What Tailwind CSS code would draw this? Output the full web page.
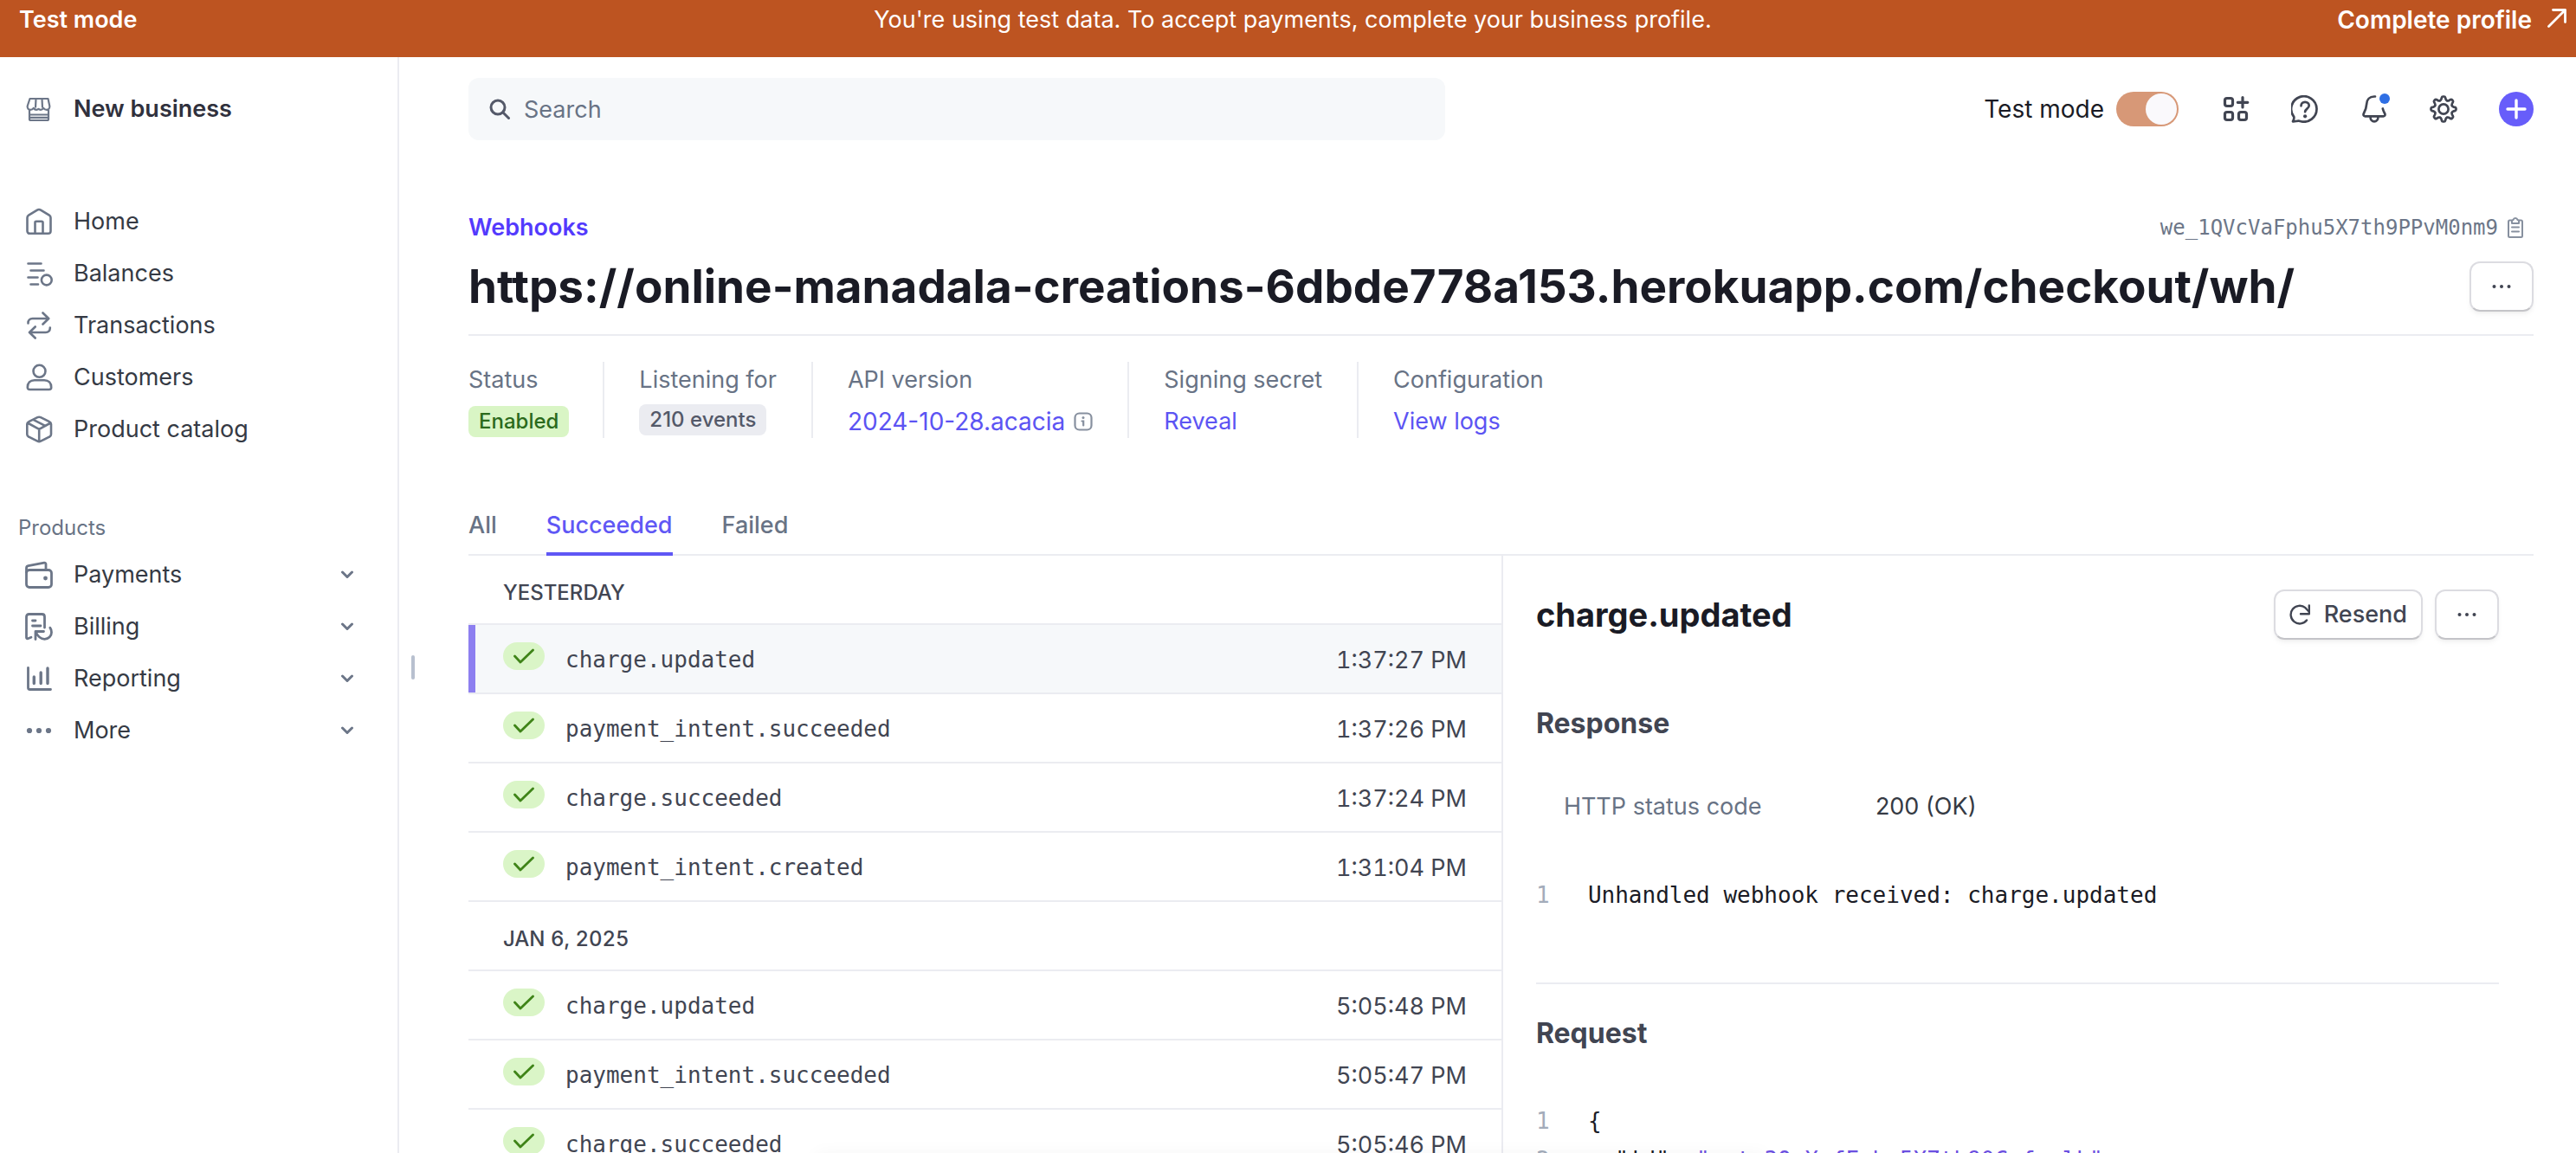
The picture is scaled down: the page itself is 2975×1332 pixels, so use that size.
<!DOCTYPE html>
<html lang="en">
<head>
<meta charset="utf-8">
<meta name="viewport" content="width=device-width, initial-scale=1">
<title>Webhooks</title>
<script src="https://cdn.jsdelivr.net/npm/@tailwindcss/browser@4"></script>
</head>
<body class="flex h-screen flex-col overflow-hidden bg-white font-['Inter','Liberation_Sans',sans-serif] text-[27px] leading-8 text-[#414552]">

<!-- Test mode banner -->
<div class="grid h-[66px] shrink-0 grid-cols-[1fr_auto_1fr] items-start bg-[#bd5421] pr-[11px] pl-[22px] leading-[46px] text-white">
  <strong class="font-semibold">Test mode</strong>
  <p>You're using test data. To accept payments, complete your business profile.</p>
  <a href="#" class="flex items-start justify-end gap-[18px] text-[28px] font-semibold">Complete profile
    <svg class="mt-[10px] size-[22px]" viewBox="0 0 22 22" fill="none" stroke="currentColor" stroke-width="2.800" stroke-linecap="round" stroke-linejoin="round"><path d="M1.500 20.500 20.500 1.500M6.500 1.500h14v14"/></svg>
  </a>
</div>

<div class="flex min-h-0 flex-1">
  <!-- Sidebar -->
  <nav class="w-[461px] shrink-0 border-r-2 border-[#ebecf1] text-[#353a44]" aria-label="Main">
    <a href="#" class="mt-[30px] flex h-[60px] items-center gap-6 pl-[29px] font-semibold text-[#30313d]">
      <svg class="size-8 text-[#6c7688]" viewBox="0 0 32 32" fill="none" stroke="currentColor" stroke-width="2.200" stroke-linejoin="round"><path d="M5.500 4h21l1.800 8.500c.4 2.500-1.200 4.300-3.300 4.300s-3.300-1.300-3.800-2c-.8 1.200-2 2-3.300 2s-2-.6-2.400-1c-.5.500-1.200 1-2.400 1s-2.600-.9-3.300-2c-.6.900-1.800 2-3.800 2-2.200 0-3.700-1.800-3.300-4.300zM12.500 4 12 14.500M19.500 4l.5 10.500M5 17v10.500c0 .9.700 1.500 1.500 1.500h19c.8 0 1.500-.6 1.500-1.500V17M5 22.500h22M5 25.800h22"/></svg>
      New business</a>

    <ul class="mt-[70px]">
      <li><a href="#" class="flex h-[60px] items-center gap-6 pl-[29px]">
        <svg class="size-8 text-[#6c7688]" viewBox="0 0 32 32" fill="none" stroke="currentColor" stroke-width="2.600" stroke-linejoin="round"><path d="M2.500 11.500c0-1.300.6-2.200 1.600-2.800L14 2.600c1.300-.8 2.700-.8 4 0l9.900 6.100c1 .6 1.600 1.500 1.600 2.800V27c0 1.600-1.200 2.800-2.800 2.800H5.300A2.800 2.800 0 0 1 2.500 27zM11.500 29.500V17c0-.8.6-1.300 1.300-1.300h6.400c.7 0 1.300.5 1.300 1.300v12.500"/></svg>
        Home</a></li>
      <li><a href="#" class="flex h-[60px] items-center gap-6 pl-[29px]">
        <svg class="size-8 text-[#6c7688]" viewBox="0 0 32 32" fill="none" stroke="currentColor" stroke-width="2.600" stroke-linecap="round"><path d="M3.500 4.500h15M6.500 12.500h15M3.500 20.500h11M6.500 28.500h8.500"/><circle cx="24.800" cy="23.500" r="5.900"/></svg>
        Balances</a></li>
      <li><a href="#" class="flex h-[60px] items-center gap-6 pl-[29px]">
        <svg class="size-8 text-[#6c7688]" viewBox="0 0 32 32" fill="none" stroke="currentColor" stroke-width="2.600" stroke-linecap="round" stroke-linejoin="round"><path d="M3.500 13.500V13c0-3 2-5 5-5h18.500M20.500 1.500 27.200 8l-6.700 6.500M28.800 18.500v.5c0 3-2 5-5 5H5.200M11.700 17.500 5 24l6.700 6.500"/></svg>
        Transactions</a></li>
      <li><a href="#" class="flex h-[60px] items-center gap-6 pl-[29px]">
        <svg class="size-8 text-[#6c7688]" viewBox="0 0 32 32" fill="none" stroke="currentColor" stroke-width="2.600" stroke-linejoin="round"><circle cx="16.500" cy="8.800" r="7"/><path d="M2.800 27.500c0-5 3-8.200 8-8.200h11.400c5 0 8 3.200 8 8.200 0 1.500-.9 2.500-2.500 2.500H5.300c-1.600 0-2.500-1-2.500-2.500z"/></svg>
        Customers</a></li>
      <li><a href="#" class="flex h-[60px] items-center gap-6 pl-[29px]">
        <svg class="size-8 text-[#6c7688]" viewBox="0 0 32 32" fill="none" stroke="currentColor" stroke-width="2.600" stroke-linejoin="round"><path d="M14.300 2.200c1.200-.6 2.500-.6 3.700 0l10 4.900c1.300.6 2 1.600 2 3v11.600c0 1.400-.7 2.400-2 3l-10 5c-1.200.6-2.500.6-3.700 0l-10-5c-1.300-.6-2-1.600-2-3V10.100c0-1.400.7-2.400 2-3zM2.800 8.500l13.400 7.300 13.300-7.300M16.200 15.800v14.500M9.500 4.800l13.600 7"/></svg>
        Product catalog</a></li>
    </ul>

    <h2 class="mt-[69px] mb-[9px] pl-[21px] text-2xl leading-[30px] text-[#687385]">Products</h2>
    <ul>
      <li><button type="button" class="flex h-[60px] w-full items-center gap-6 pr-[50px] pl-[29px] text-left">
        <svg class="size-8 text-[#6c7688]" viewBox="0 0 32 32" fill="none" stroke="currentColor" stroke-width="2.800" stroke-linejoin="round"><rect x="1.500" y="10.500" width="29" height="20" rx="3.500"/><path d="M1.500 14V8.200c0-1.500.7-2.300 2.200-2.600L22 2.200c1.300-.2 2 .4 2 1.600v6.500"/><circle cx="23.500" cy="20" r="2.400" fill="currentColor" stroke="none"/></svg>
        <span class="flex-1">Payments</span>
        <svg class="h-[10px] w-4 text-[#6c7688]" viewBox="0 0 16 10" fill="none" stroke="currentColor" stroke-width="3" stroke-linecap="round" stroke-linejoin="round"><path d="m2.500 2 5.500 5.500L13.500 2"/></svg></button></li>
      <li><button type="button" class="flex h-[60px] w-full items-center gap-6 pr-[50px] pl-[29px] text-left">
        <svg class="size-8 text-[#6c7688]" viewBox="0 0 32 32" fill="none" stroke="currentColor" stroke-width="2.800" stroke-linecap="round" stroke-linejoin="round"><path d="M7 28.300l-3.800 1.400c-1 .3-1.700-.2-1.700-1.200V4.500c0-1.800 1.200-3 3-3h15c1.800 0 3 1.200 3 3V17M8.500 9h3.500M8.500 15h9.500M12 30.500v-9h9.500M12.300 22c2 4.500 5.500 8.300 10.200 8.300 4.500 0 8-3.300 8-7.800 0-2-.6-3.800-1.700-5.300"/></svg>
        <span class="flex-1">Billing</span>
        <svg class="h-[10px] w-4 text-[#6c7688]" viewBox="0 0 16 10" fill="none" stroke="currentColor" stroke-width="3" stroke-linecap="round" stroke-linejoin="round"><path d="m2.500 2 5.500 5.500L13.500 2"/></svg></button></li>
      <li><button type="button" class="flex h-[60px] w-full items-center gap-6 pr-[50px] pl-[29px] text-left">
        <svg class="size-8 text-[#6c7688]" viewBox="0 0 32 32" fill="none" stroke="currentColor" stroke-width="2.800" stroke-linecap="round" stroke-linejoin="round"><path d="M3.500 3.500v23c0 1.300.7 2 2 2h24"/><path stroke-width="3.400" d="M10.300 14v7.500M18.200 9v12.500M26 4v17.500"/></svg>
        <span class="flex-1">Reporting</span>
        <svg class="h-[10px] w-4 text-[#6c7688]" viewBox="0 0 16 10" fill="none" stroke="currentColor" stroke-width="3" stroke-linecap="round" stroke-linejoin="round"><path d="m2.500 2 5.500 5.500L13.500 2"/></svg></button></li>
      <li><button type="button" class="flex h-[60px] w-full items-center gap-6 pr-[50px] pl-[29px] text-left">
        <svg class="size-8 text-[#6c7688]" viewBox="0 0 32 32" fill="currentColor"><circle cx="5" cy="16" r="3.100"/><circle cx="16" cy="16" r="3.100"/><circle cx="27" cy="16" r="3.100"/></svg>
        <span class="flex-1">More</span>
        <svg class="h-[10px] w-4 text-[#6c7688]" viewBox="0 0 16 10" fill="none" stroke="currentColor" stroke-width="3" stroke-linecap="round" stroke-linejoin="round"><path d="m2.500 2 5.500 5.500L13.500 2"/></svg></button></li>
    </ul>
  </nav>

  <!-- Sidebar resize handle -->
  <div class="w-20 shrink-0 pt-[691px] pl-[14px]">
    <button type="button" aria-label="Resize sidebar" class="block h-7 w-1 rounded-full bg-[#b8c0cf]"></button>
  </div>

  <div class="flex min-w-0 flex-1 flex-col pt-6 pr-[49px]">
    <!-- Toolbar -->
    <header class="flex h-[72px] shrink-0 items-center justify-between">
      <label class="flex h-full max-w-[1128px] flex-1 items-center gap-4 rounded-xl bg-[#f6f8fa] pl-6">
        <svg class="size-6 text-[#545969]" viewBox="0 0 24 24" fill="none" stroke="currentColor" stroke-width="3" stroke-linecap="round"><circle cx="10" cy="10" r="8"/><path d="m16 16 6.500 6.500"/></svg>
        <span class="sr-only">Search</span>
        <input type="search" placeholder="Search" class="h-full min-w-0 flex-1 bg-transparent outline-none placeholder:text-[#687385]">
      </label>
      <div class="flex items-center gap-12 text-[#414552]">
        <label class="mr-0.5 flex items-center gap-[14px] text-[28px] text-[#1a1b25]">Test mode
          <input type="checkbox" role="switch" checked class="flex h-10 w-[72px] appearance-none items-center justify-end rounded-full bg-[#d79877] pr-[2px] before:block before:size-9 before:rounded-full before:bg-[#faf9fc]">
        </label>
        <button type="button" aria-label="Apps"><svg class="size-8" viewBox="0 0 32 32" fill="none" stroke="currentColor" stroke-width="3.200" stroke-linecap="round"><rect x="3.500" y="3.500" width="9" height="9" rx="2.500"/><rect x="3.500" y="19.500" width="9" height="9" rx="2.500"/><rect x="19.500" y="19.500" width="9" height="9" rx="2.500"/><path d="M24 2.500v11.500M18.300 8.300h11.500"/></svg></button>
        <button type="button" aria-label="Help"><svg class="size-8" viewBox="0 0 32 32" fill="none" stroke="currentColor" stroke-width="2.700" stroke-linecap="round" stroke-linejoin="round"><path d="M2 30.300c1-1.500 1.500-3.300 1.300-5.200A14.700 14.700 0 1 1 10.500 30c-2.500-1-5.500.6-8.500.3zM11.500 12.300c0-2.700 2-4.500 4.600-4.500s4.600 1.800 4.600 4.200c0 3.400-4.600 3.800-4.600 7.200"/><circle cx="16.100" cy="24.300" r="2.100" fill="currentColor" stroke="none"/></svg></button>
        <button type="button" aria-label="Notifications" class="relative"><svg class="size-8" viewBox="0 0 32 32" fill="none" stroke="currentColor" stroke-width="2.700" stroke-linecap="round" stroke-linejoin="round"><path d="M17 1.500h-1c-5.500 0-8.500 3.500-8.800 8.500-.3 4.500-1.300 7.500-3.300 11-.9 1.700-.3 3.300 1.500 3.300h21.200c1.800 0 2.400-1.600 1.500-3.300-1-1.800-1.800-3.500-2.300-5.500M11.500 25c0 3 2 5.300 4.500 5.300s4.500-2.300 4.500-5.300"/></svg><span class="absolute -top-0.5 -right-0.5 size-3 rounded-full bg-[#2f6fe4]"></span></button>
        <button type="button" aria-label="Settings"><svg class="size-8" viewBox="0 0 32 32" fill="none" stroke="currentColor" stroke-width="2.700" stroke-linecap="round" stroke-linejoin="round"><path id="tooth" d="M11.940 6.210Q13.200 5.700 13.600 4.200L13.900 2.900Q14.200 1.500 15.400 1.500H16.600Q17.800 1.500 18.100 2.900L18.400 4.200Q18.800 5.700 20.060 6.210"/><use href="#tooth" transform="rotate(45 16 16)"/><use href="#tooth" transform="rotate(90 16 16)"/><use href="#tooth" transform="rotate(135 16 16)"/><use href="#tooth" transform="rotate(180 16 16)"/><use href="#tooth" transform="rotate(225 16 16)"/><use href="#tooth" transform="rotate(270 16 16)"/><use href="#tooth" transform="rotate(315 16 16)"/><circle cx="16" cy="16" r="5.600"/></svg></button>
        <button type="button" aria-label="Create" class="flex size-10 items-center justify-center rounded-full bg-[#675dfa] text-white"><svg class="size-6" viewBox="0 0 24 24" stroke="currentColor" stroke-width="3.400" stroke-linecap="round"><path d="M12 2v20M2 12h20"/></svg></button>
      </div>
    </header>

    <main class="mt-[84px] flex min-h-0 flex-1 flex-col">
      <div class="flex shrink-0 items-center justify-between leading-[34px]">
        <a href="#" class="font-semibold text-[#533afd]">Webhooks</a>
        <button type="button" class="flex items-center gap-2 pr-[9px] font-['DejaVu_Sans_Mono',monospace] text-2xl leading-[34px] text-[#6c7688]">we_1QVcVaFphu5X7th9PPvM0nm9
          <svg class="size-6 text-[#87909f]" viewBox="0 0 24 24" fill="none" stroke="currentColor" stroke-width="2" stroke-linecap="round" stroke-linejoin="round"><path d="M8 3.500H5.500C4.600 3.500 4 4.100 4 5v16.500c0 .9.600 1.500 1.500 1.500h13c.9 0 1.500-.6 1.500-1.500V5c0-.9-.6-1.500-1.500-1.500H16M8 7V3.500l1.500-.5a2.600 2.600 0 0 1 5 0l1.500.5V7zM8 11.500h8M8 16.500h8"/></svg>
        </button>
      </div>

      <div class="mt-[22px] flex shrink-0 items-center justify-between border-b-2 border-[#ebecf1] pb-[26px]">
        <h1 class="text-[53px] leading-[58px] font-bold text-[#1a1b25]">https://online-manadala-creations-6dbde778a153.herokuapp.com/checkout/wh/</h1>
        <button type="button" aria-label="More actions" class="flex h-[58px] w-[74px] items-center justify-center rounded-xl border-2 border-[#dcdce1] border-b-[#c4c4c8] shadow-md shadow-black/5"><svg class="h-1 w-[22px]" viewBox="0 0 22 4" fill="currentColor"><circle cx="2.500" cy="2" r="2"/><circle cx="11" cy="2" r="2"/><circle cx="19.500" cy="2" r="2"/></svg></button>
      </div>

      <dl class="mt-[30px] flex h-[88px] shrink-0 divide-x-2 divide-[#ebecf1] leading-9 text-[#687385]">
        <div class="pr-[39px]"><dt class="leading-[42px]">Status</dt><dd class="mt-[9px]"><span class="block rounded-lg bg-[#d9f5c5] px-3 text-2xl leading-9 font-medium text-[#2b6a1c]">Enabled</span></dd></div>
        <div class="px-10"><dt class="leading-[42px]">Listening for</dt><dd class="mt-[7px] flex"><span class="rounded-lg bg-[#ebecf1] px-3 text-2xl leading-9 font-medium text-[#545969]">210 events</span></dd></div>
        <div class="px-10"><dt class="leading-[42px]">API version</dt><dd class="mt-[9px] flex items-center gap-[10px]"><a href="#" class="text-[28px] text-[#5c54f3]">2024-10-28.acacia</a><svg class="size-[22px]" viewBox="0 0 22 22" fill="none" stroke="#87909f" stroke-width="2.200" stroke-linecap="round"><rect x="1.500" y="1.500" width="19" height="19" rx="5"/><path d="M9.500 10.500h1.700v5"/><circle cx="11" cy="6.500" r="1.500" fill="#87909f" stroke="none"/></svg></dd></div>
        <div class="px-10"><dt class="leading-[42px]">Signing secret</dt><dd class="mt-[9px]"><button type="button" class="block leading-9 text-[#5c54f3]">Reveal</button></dd></div>
        <div class="px-10"><dt class="leading-[42px]">Configuration</dt><dd class="mt-[9px]"><a href="#" class="text-[#5c54f3]">View logs</a></dd></div>
      </dl>

      <div role="tablist" class="mt-[84px] flex shrink-0 gap-[57px] border-b-2 border-[#ebecf1] font-medium text-[#687385]">
        <button type="button" role="tab" aria-selected="false" class="-mb-0.5 border-b-4 border-transparent pb-[14px] leading-[34px]">All</button>
        <button type="button" role="tab" aria-selected="true" class="-mb-0.5 border-b-4 border-[#5f57f5] pb-[14px] leading-[34px] text-[#5f57f5]">Succeeded</button>
        <button type="button" role="tab" aria-selected="false" class="-mb-0.5 border-b-4 border-transparent pb-[14px] leading-[34px]">Failed</button>
      </div>

      <div class="grid min-h-0 flex-1 grid-cols-[501fr_499fr]">
        <!-- Event list -->
        <section class="overflow-hidden border-r-2 border-[#ebecf1] tabular-nums">
          <h2 class="flex h-20 items-center border-b-2 border-[#ebecf1] pt-2 pl-10 text-2xl font-medium">YESTERDAY</h2>
          <ul>
            <li><a href="#" aria-current="true" class="flex h-20 items-center border-b-2 border-[#ebecf1] bg-[#f6f8fa] pr-10">
              <span class="mr-8 w-2 self-stretch bg-[#8d7ff0]"></span>
              <span class="mr-6 mb-1.5 flex h-8 w-12 items-center justify-center rounded-full bg-[#daf5c7]"><svg class="h-[18px] w-6" viewBox="0 0 24 18" fill="none" stroke="#3f8418" stroke-width="2.800" stroke-linecap="round" stroke-linejoin="round"><path d="m1.500 9 6.500 7L22.500 2"/></svg></span>
              <span class="flex-1 pt-0.5 font-['DejaVu_Sans_Mono',monospace] text-[26px]">charge.updated</span><time class="pt-1">1:37:27 PM</time></a></li>
            <li><a href="#" class="flex h-20 items-center border-b-2 border-[#ebecf1] pr-10 pl-10">
              <span class="mr-6 mb-1.5 flex h-8 w-12 items-center justify-center rounded-full bg-[#daf5c7]"><svg class="h-[18px] w-6" viewBox="0 0 24 18" fill="none" stroke="#3f8418" stroke-width="2.800" stroke-linecap="round" stroke-linejoin="round"><path d="m1.500 9 6.500 7L22.500 2"/></svg></span>
              <span class="flex-1 pt-0.5 font-['DejaVu_Sans_Mono',monospace] text-[26px]">payment_intent.succeeded</span><time class="pt-1">1:37:26 PM</time></a></li>
            <li><a href="#" class="flex h-20 items-center border-b-2 border-[#ebecf1] pr-10 pl-10">
              <span class="mr-6 mb-1.5 flex h-8 w-12 items-center justify-center rounded-full bg-[#daf5c7]"><svg class="h-[18px] w-6" viewBox="0 0 24 18" fill="none" stroke="#3f8418" stroke-width="2.800" stroke-linecap="round" stroke-linejoin="round"><path d="m1.500 9 6.500 7L22.500 2"/></svg></span>
              <span class="flex-1 pt-0.5 font-['DejaVu_Sans_Mono',monospace] text-[26px]">charge.succeeded</span><time class="pt-1">1:37:24 PM</time></a></li>
            <li><a href="#" class="flex h-20 items-center border-b-2 border-[#ebecf1] pr-10 pl-10">
              <span class="mr-6 mb-1.5 flex h-8 w-12 items-center justify-center rounded-full bg-[#daf5c7]"><svg class="h-[18px] w-6" viewBox="0 0 24 18" fill="none" stroke="#3f8418" stroke-width="2.800" stroke-linecap="round" stroke-linejoin="round"><path d="m1.500 9 6.500 7L22.500 2"/></svg></span>
              <span class="flex-1 pt-0.5 font-['DejaVu_Sans_Mono',monospace] text-[26px]">payment_intent.created</span><time class="pt-1">1:31:04 PM</time></a></li>
          </ul>
          <h2 class="flex h-20 items-center border-b-2 border-[#ebecf1] pt-2 pl-10 text-2xl font-medium">JAN 6, 2025</h2>
          <ul>
            <li><a href="#" class="flex h-20 items-center border-b-2 border-[#ebecf1] pr-10 pl-10">
              <span class="mr-6 mb-1.5 flex h-8 w-12 items-center justify-center rounded-full bg-[#daf5c7]"><svg class="h-[18px] w-6" viewBox="0 0 24 18" fill="none" stroke="#3f8418" stroke-width="2.800" stroke-linecap="round" stroke-linejoin="round"><path d="m1.500 9 6.500 7L22.500 2"/></svg></span>
              <span class="flex-1 pt-0.5 font-['DejaVu_Sans_Mono',monospace] text-[26px]">charge.updated</span><time class="pt-1">5:05:48 PM</time></a></li>
            <li><a href="#" class="flex h-20 items-center border-b-2 border-[#ebecf1] pr-10 pl-10">
              <span class="mr-6 mb-1.5 flex h-8 w-12 items-center justify-center rounded-full bg-[#daf5c7]"><svg class="h-[18px] w-6" viewBox="0 0 24 18" fill="none" stroke="#3f8418" stroke-width="2.800" stroke-linecap="round" stroke-linejoin="round"><path d="m1.500 9 6.500 7L22.500 2"/></svg></span>
              <span class="flex-1 pt-0.5 font-['DejaVu_Sans_Mono',monospace] text-[26px]">payment_intent.succeeded</span><time class="pt-1">5:05:47 PM</time></a></li>
            <li><a href="#" class="flex h-20 items-center border-b-2 border-[#ebecf1] pr-10 pl-10">
              <span class="mr-6 mb-1.5 flex h-8 w-12 items-center justify-center rounded-full bg-[#daf5c7]"><svg class="h-[18px] w-6" viewBox="0 0 24 18" fill="none" stroke="#3f8418" stroke-width="2.800" stroke-linecap="round" stroke-linejoin="round"><path d="m1.500 9 6.500 7L22.500 2"/></svg></span>
              <span class="flex-1 pt-0.5 font-['DejaVu_Sans_Mono',monospace] text-[26px]">charge.succeeded</span><time class="pt-1">5:05:46 PM</time></a></li>
          </ul>
        </section>

        <!-- Event detail -->
        <section class="overflow-hidden pt-[39px] pr-10 pl-[38px]">
          <div class="flex h-[58px] items-center justify-between">
            <h2 class="text-[38px] leading-[58px] font-bold text-[#1a1b25]">charge.updated</h2>
            <div class="flex gap-[14px]">
              <button type="button" class="flex h-[58px] items-center gap-4 rounded-xl border-2 border-[#dcdce1] border-b-[#c4c4c8] px-4 font-medium shadow-md shadow-black/5"><svg class="size-6" viewBox="0 0 24 24" fill="none" stroke="currentColor" stroke-width="2.400" stroke-linecap="round" stroke-linejoin="round"><path d="M20 18.500A10.300 10.300 0 1 1 18.500 4.200L22.500 8.500M22.800 1.500v9.800H13"/></svg>Resend</button>
              <button type="button" aria-label="More actions" class="flex h-[58px] w-[74px] items-center justify-center rounded-xl border-2 border-[#dcdce1] border-b-[#c4c4c8] shadow-md shadow-black/5"><svg class="h-1 w-[22px]" viewBox="0 0 22 4" fill="currentColor"><circle cx="2.500" cy="2" r="2"/><circle cx="11" cy="2" r="2"/><circle cx="19.500" cy="2" r="2"/></svg></button>
            </div>
          </div>

          <h3 class="mt-[77px] text-[32px] leading-10 font-bold">Response</h3>
          <dl class="mt-[60px] flex pl-8"><dt class="w-[360px] text-[#687385]">HTTP status code</dt><dd class="text-[#353a44]">200 (OK)</dd></dl>
          <div class="mt-[64px] flex font-['DejaVu_Sans_Mono',monospace] text-[26px] leading-[45px] text-[#1a1b25]"><span class="w-[60px] text-[#a3acba]">1</span><code class="font-['DejaVu_Sans_Mono',monospace]">Unhandled webhook received: charge.updated</code></div>

          <h3 class="mt-[78px] border-t-2 border-[#ebecf1] pt-[37px] text-[32px] leading-10 font-bold">Request</h3>
          <div class="mt-[59px] grid grid-cols-[60px_1fr] font-['DejaVu_Sans_Mono',monospace] text-[26px] leading-[45px] text-[#1a1b25]">
            <span class="text-[#a3acba]">1</span><code class="font-['DejaVu_Sans_Mono',monospace]">{</code>
            <span class="text-[#a3acba]">2</span><code class="font-['DejaVu_Sans_Mono',monospace] whitespace-pre">  "id": <span class="text-[#6b4fe0]">"evt_3QeXafFphu5X7th90Cpfzolk"</span>,</code>
          </div>
        </section>
      </div>
    </main>
  </div>
</div>
<!-- Collapsed developer drawer: only its shadow rises above the window's lower edge -->
<div class="pointer-events-none fixed top-full left-[31.6%] h-12 w-[37%] rounded-xl shadow-[0_0_20px] shadow-black/4"></div>
</body>
</html>
